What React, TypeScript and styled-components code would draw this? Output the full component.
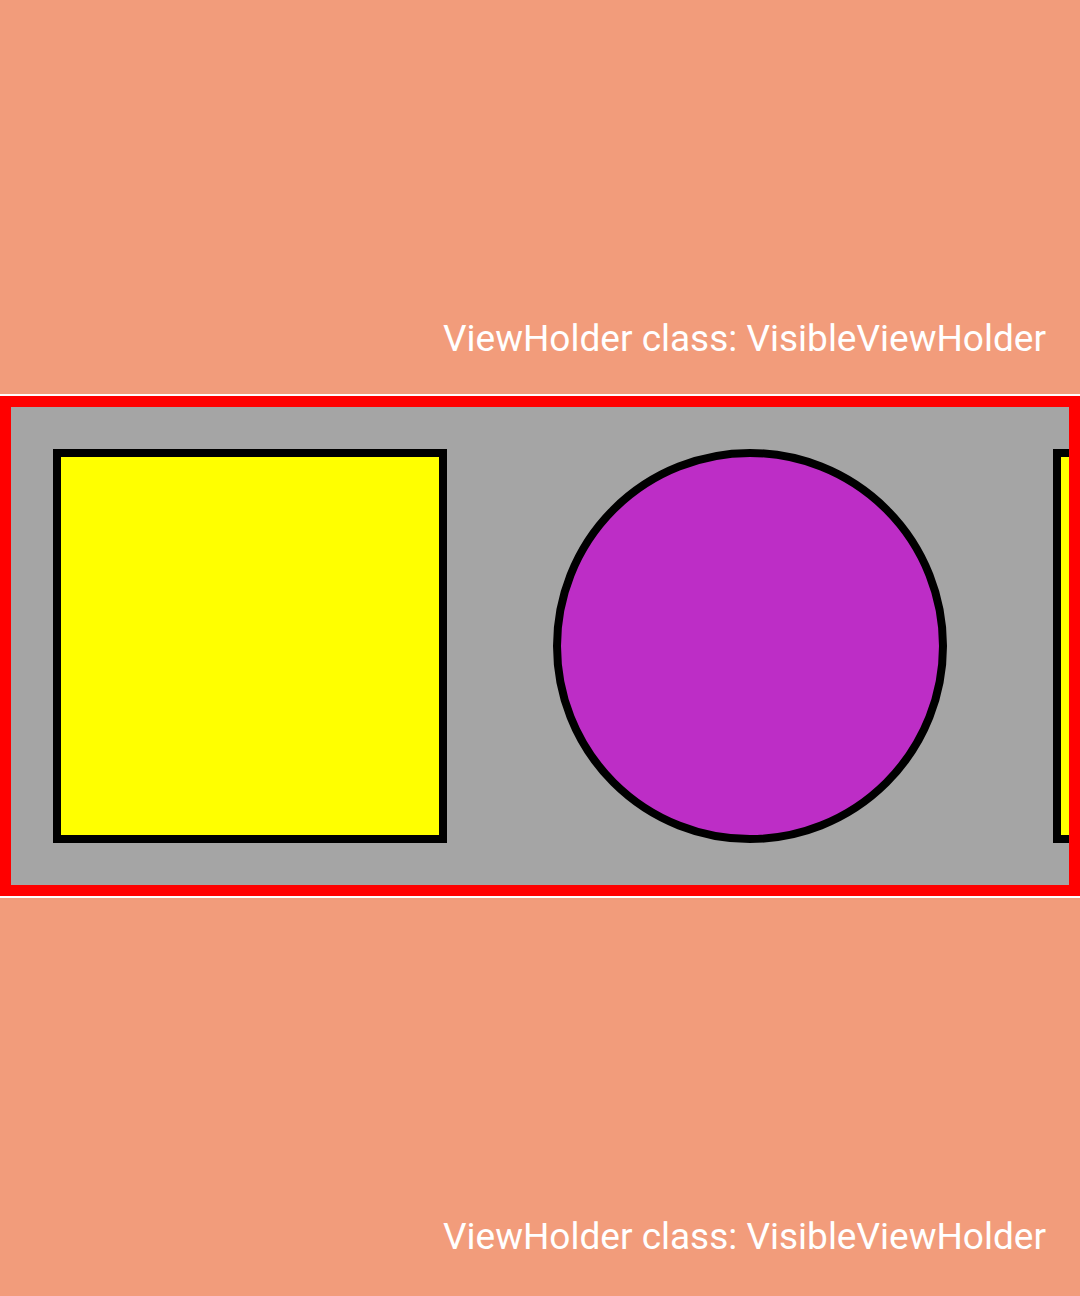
import React from "react";
import styled, { createGlobalStyle } from "styled-components";

const Global = createGlobalStyle`
  html, body { margin: 0; padding: 0; background: #f29c7b; }
  body { font-family: Roboto, "Liberation Sans", sans-serif; overflow: hidden; }
`;

const Page = styled.div`
  display: flex;
  flex-direction: column;
  width: 1080px;
`;

const TextRow = styled.div`
  height: 394px;
  box-sizing: border-box;
  background: #f29c7b;
  display: flex;
  align-items: flex-end;
  justify-content: flex-end;
  padding: 0 34px 34px 0;
`;

const Label = styled.span`
  color: #ffffff;
  font-size: 37px;
  line-height: 43px;
  font-family: Roboto, "Liberation Sans", sans-serif;
`;

const Divider = styled.div`
  height: 2px;
  background: #ffffff;
`;

const Carousel = styled.div`
  position: relative;
  height: 500px;
  background: #a5a5a5;
  overflow: hidden;
  display: flex;
`;

const Frame = styled.div`
  position: absolute;
  inset: 0;
  border: 11px solid #ff0000;
  pointer-events: none;
`;

const Cell = styled.div`
  flex: 0 0 500px;
  height: 500px;
  display: flex;
  align-items: center;
  justify-content: center;
`;

const Shape = styled.div<{ $round?: boolean; $color: string }>`
  width: 394px;
  height: 394px;
  box-sizing: border-box;
  border: 8px solid #000;
  background: ${(p) => p.$color};
  border-radius: ${(p) => (p.$round ? "50%" : "0")};
`;

const items = [
  { round: false, color: "#ffff00" },
  { round: true, color: "#bd2dc6" },
  { round: false, color: "#ffff00" },
];

export default function App() {
  return (
    <Page>
      <Global />
      <TextRow>
        <Label>ViewHolder class: VisibleViewHolder</Label>
      </TextRow>
      <Divider />
      <Carousel>
        {items.map((it, i) => (
          <Cell key={i}>
            <Shape $round={it.round} $color={it.color} />
          </Cell>
        ))}
        <Frame />
      </Carousel>
      <Divider />
      <TextRow>
        <Label>ViewHolder class: VisibleViewHolder</Label>
      </TextRow>
    </Page>
  );
}
